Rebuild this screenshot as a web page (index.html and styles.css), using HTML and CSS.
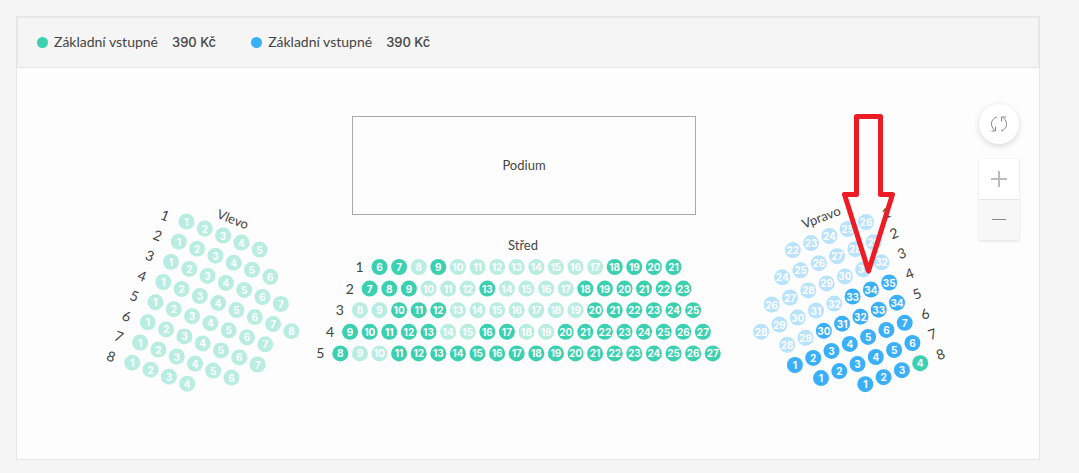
FILE: index.html
```html
<!DOCTYPE html>
<html lang="cs">

<head>
    <meta charset="UTF-8">
    <meta name="viewport" content="width=device-width, initial-scale=1.0">
    <title>Výběr míst</title>
    <link rel="stylesheet" href="styles.css">
</head>

<body>
    <main class="panel">
        <ul class="legend">
            <li class="legend-item">
                <span class="dot dot-green"></span>
                <span class="legend-name">Základní vstupné</span>
                <span class="legend-price">390 Kč</span>
            </li>
            <li class="legend-item">
                <span class="dot dot-blue"></span>
                <span class="legend-name">Základní vstupné</span>
                <span class="legend-price">390 Kč</span>
            </li>
        </ul>

        <div class="hall">
            <svg class="map" viewBox="0 0 1022 391">
                <rect class="stage" x="335.5" y="48.5" width="343" height="98" />
                <text class="title" x="507" y="102">Podium</text>
                <g id="seats"></g>
                <path class="arrow" d="M839.5 48.5H863.5V126.5H875.5L851.5 203L827.5 126.5H839.5Z" />
            </svg>

            <div class="controls">
                <button type="button" class="reset" aria-label="Obnovit">
                    <svg width="20" height="20" viewBox="0 0 20 20">
                        <path d="M8 3C1.5 5 .5 12 6 16.5M2.5 17H6.5V12.5" />
                        <path d="M12 17C18.5 15 19.5 8 14 3.5M17 3H12.5V7.5" />
                    </svg>
                </button>
                <div class="zoom">
                    <button type="button" class="zoom-in" aria-label="Přiblížit">
                        <svg width="16" height="16" viewBox="0 0 16 16">
                            <path d="M0 8H16M8 0V16" />
                        </svg>
                    </button>
                    <button type="button" class="zoom-out" aria-label="Oddálit">
                        <svg width="16" height="16" viewBox="0 0 16 16">
                            <path d="M1 7.5H15" />
                        </svg>
                    </button>
                </div>
            </div>
        </div>
    </main>

    <script src="script.js"></script>
</body>

</html>
```

FILE: styles.css
```css
/* Global styles */
body {
    font-family: Lato, "Open Sans", sans-serif;
    margin: 0;
    padding: 16px 39px 12px 16px;
    background-color: #f5f5f5;
    color: #444;
}

.panel {
    background-color: #fdfdfd;
    border: 1px solid #e6e6e6;
}

/* Price legend */
.legend {
    display: flex;
    flex-wrap: wrap;
    gap: 35px;
    margin: 0;
    padding: 14px 19px 15px;
    list-style: none;
    font-size: 14px;
    line-height: 20px;
    background-color: #f5f5f5;
    border: 1px solid #e6e6e6;
}

.legend-item {
    display: flex;
    align-items: center;
}

.dot {
    width: 11px;
    height: 11px;
    margin-right: 6px;
    border-radius: 50%;
}

.dot-green {
    background-color: #3bd0b0;
}

.dot-blue {
    background-color: #3aaffa;
}

.legend-price {
    margin-left: 14px;
    font-family: Inter, sans-serif;
    font-size: 13px;
    font-weight: 500;
}

/* Seat map */
.hall {
    position: relative;
}

.map {
    display: block;
    width: 100%;
    height: auto;
}

.stage {
    fill: none;
    stroke: #aaa;
}

.title,
.row-label {
    fill: #444;
    text-anchor: middle;
}

.title {
    font-size: 13px;
}

.row-label {
    font-size: 14px;
}

.seat-number {
    font-family: Inter, sans-serif;
    font-size: 10px;
    font-weight: 700;
    fill: #fff;
    text-anchor: middle;
}

.green {
    fill: #3bd0b0;
}

.green-taken {
    fill: #b9ede2;
}

.blue {
    fill: #3aaffa;
}

.blue-taken {
    fill: #b9e2fd;
}

.arrow {
    fill: none;
    stroke: #ed1c24;
    stroke-width: 5;
    stroke-linejoin: round;
}

/* Map controls */
.controls {
    position: absolute;
    top: 36px;
    right: 20px;
    display: flex;
    flex-direction: column;
    gap: 15px;
}

.controls button {
    display: flex;
    align-items: center;
    justify-content: center;
    width: 40px;
    height: 40px;
    padding: 0;
    border: none;
    background-color: #fff;
    cursor: pointer;
}

.controls svg {
    fill: none;
    stroke: #888;
}

.controls .reset {
    border-radius: 50%;
    box-shadow: 0 2px 6px rgba(0, 0, 0, 0.15);
}

.zoom {
    box-shadow: 0 1px 3px rgba(0, 0, 0, 0.12);
}

.controls .zoom-in svg {
    stroke: #bbb;
    stroke-width: 2;
}

.controls .zoom-out {
    height: 41px;
    border-top: 1px solid #e6e6e6;
    background-color: #f7f7f7;
}
```

FILE: script.js
```js
const SVG_NS = "http://www.w3.org/2000/svg";
const SEAT_STEP = 19.6;
const ROW_STEP = 21.6;
const SEAT_RADIUS = 8;

// x, y = first seat of row 1, or its last seat when the block is aligned right
// shift = where the row starts against row 1, in seats
const blocks = [
    {
        name: "Vlevo", title: [216, 151], x: 169.5, y: 153.5, angle: 21, color: "green", align: "left", labelGap: 22, labelDrop: 2,
        rows: [
            { from: 1, to: 5 },
            { from: 1, to: 6 },
            { from: 1, to: 7 },
            { from: 1, to: 8 },
            { from: 1, to: 7 },
            { from: 1, to: 7 },
            { from: 1, to: 6 },
            { from: 1, to: 4 }
        ]
    },
    {
        name: "Střed", title: [506, 177], x: 362.5, y: 199, angle: 0, color: "green", align: "left", labelGap: 20, labelDrop: 0,
        rows: [
            { from: 6, to: 21, free: [6, 7, 9, 18, 19, 20, 21] },
            { from: 7, to: 23, shift: -0.5, free: [7, 8, 9, 13, 18, 19, 20, 21, 22, 23] },
            { from: 8, to: 25, shift: -1, free: [10, 11, 12, 20, 21, 22, 23, 24, 25] },
            { from: 9, to: 27, shift: -1.5, free: [9, 10, 11, 12, 13, 16, 17, 20, 21, 22, 23, 24, 25, 26, 27] },
            { from: 8, to: 27, shift: -2, free: [8, 11, 12, 13, 14, 15, 16, 17, 18, 19, 20, 21, 22, 23, 24, 25, 26, 27] }
        ]
    },
    {
        name: "Vpravo", title: [804, 149], x: 849, y: 154, angle: -21, color: "blue", align: "right", labelGap: 22, labelDrop: -1,
        rows: [
            { from: 22, to: 26 },
            { from: 24, to: 29 },
            { from: 26, to: 32 },
            { from: 28, to: 35, free: [33, 34, 35] },
            { from: 28, to: 34, free: [30, 31, 32, 33, 34] },
            { from: 1, to: 7, free: [1, 2, 3, 4, 5, 6, 7] },
            { from: 1, to: 6, free: [1, 2, 3, 4, 5, 6] },
            { from: 1, to: 4, free: [1, 2, 3, 4], green: [4] }
        ]
    }
];

const seats = document.getElementById("seats");

function addText(className, text, x, y, angle) {
    const node = document.createElementNS(SVG_NS, "text");
    node.setAttribute("class", className);
    node.setAttribute("transform", `translate(${x.toFixed(1)} ${y.toFixed(1)}) rotate(${angle})`);
    node.setAttribute("y", className === "seat-number" ? 4 : 5);
    node.textContent = text;
    seats.appendChild(node);
}

function addSeat(number, x, y, color) {
    const circle = document.createElementNS(SVG_NS, "circle");
    circle.setAttribute("class", color);
    circle.setAttribute("cx", x.toFixed(1));
    circle.setAttribute("cy", y.toFixed(1));
    circle.setAttribute("r", SEAT_RADIUS);
    seats.appendChild(circle);
    addText("seat-number", number, x, y, 0);
}

function drawBlock(block) {
    const rad = block.angle * Math.PI / 180;

    // position inside the block -> position on the map
    function place(along, down) {
        return [
            block.x + along * Math.cos(rad) - down * Math.sin(rad),
            block.y + along * Math.sin(rad) + down * Math.cos(rad)
        ];
    }

    addText("title", block.name, block.title[0], block.title[1], block.angle);

    block.rows.forEach((row, i) => {
        const count = row.to - row.from;
        const free = row.free || [];
        const green = row.green || [];
        const down = i * ROW_STEP;
        const start = block.align === "right" ? -count * SEAT_STEP : (row.shift || 0) * SEAT_STEP;
        const labelAt = block.align === "right" ? block.labelGap : start - block.labelGap;

        addText("row-label", i + 1, ...place(labelAt, down + block.labelDrop), block.angle);

        for (let n = row.from; n <= row.to; n++) {
            const color = green.includes(n) ? "green" : block.color;
            const [x, y] = place(start + (n - row.from) * SEAT_STEP, down);
            addSeat(n, x, y, free.includes(n) ? color : color + "-taken");
        }
    });
}

blocks.forEach(drawBlock);
```
